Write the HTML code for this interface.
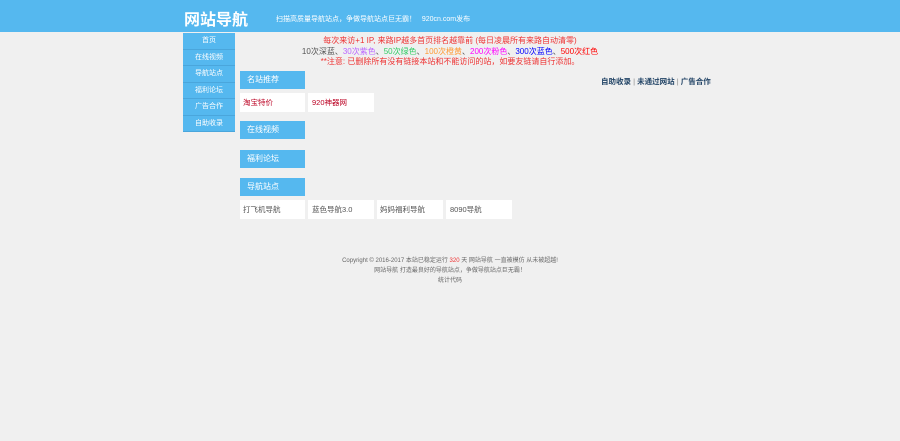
<!DOCTYPE html>
<html><head><meta charset="utf-8"><style>
*{margin:0;padding:0;box-sizing:border-box}
body{width:900px;height:441px;background:#f0f0f0;font-family:"Liberation Sans","Noto Sans CJK SC",sans-serif;position:relative;overflow:hidden;font-size:8px}
.hd{position:absolute;left:0;top:0;width:900px;height:32px;background:#55b8ef}
.logo{position:absolute;left:184px;top:6px;color:#fff;font-size:16px;font-weight:bold}
.slogan{position:absolute;left:276px;top:14px;color:#fff;font-size:7px}
.nav{position:absolute;left:183px;top:33px;width:52px}
.nav div{height:16.5px;background:#55b8ef;color:#fff;font-size:7px;text-align:center;line-height:16px;border-bottom:1px solid #4aa6dc}
.notice{position:absolute;left:270px;top:36px;width:360px;text-align:center;font-size:8px;line-height:10.5px}
.t{position:absolute;left:240px;width:65px;height:18px;background:#55b8ef;color:#fff;font-size:8px;line-height:18px;padding-left:7px}
.c{position:absolute;height:19px;background:#fff;font-size:7.5px;line-height:19px;padding-left:3px}
.links{position:absolute;left:601px;top:76px;font-size:7.5px;color:#246;font-weight:bold}
.ft{position:absolute;left:300px;width:300px;text-align:center;color:#666;font-size:6px}
</style></head><body>
<div class="hd"><div class="logo">网站导航</div><div class="slogan">扫描高质量导航站点，争做导航站点巨无霸！ &nbsp; 920cn.com发布</div></div>
<div class="nav"><div>首页</div><div>在线视频</div><div>导航站点</div><div>福利论坛</div><div>广告合作</div><div>自助收录</div></div>
<div class="notice"><div style="color:#e33">每次来访+1 IP, 来路IP越多首页排名越靠前 (每日凌晨所有来路自动清零)</div>
<div style="color:#555">10次深蓝、<span style="color:#b6f">30次紫色</span>、<span style="color:#3c6">50次绿色</span>、<span style="color:#f93">100次橙黄</span>、<span style="color:#f0f">200次粉色</span>、<span style="color:#00f">300次蓝色</span>、<span style="color:#f00">500次红色</span></div>
<div style="color:#e33">**注意: 已删除所有没有链接本站和不能访问的站，如要友链请自行添加。</div></div>
<div class="links">自助收录 <span style="font-weight:normal;color:#888">|</span> 未通过网站 <span style="font-weight:normal;color:#888">|</span> 广告合作</div>
<div class="t" style="top:71px">名站推荐</div>
<div class="c" style="left:240px;top:93px;width:65px;color:#b02">淘宝特价</div>
<div class="c" style="left:308px;top:93px;width:66px;color:#b02;padding-left:4px">920神器网</div>
<div class="t" style="top:121px">在线视频</div>
<div class="t" style="top:150px">福利论坛</div>
<div class="t" style="top:178px">导航站点</div>
<div class="c" style="left:240px;top:200px;width:65px;color:#555">打飞机导航</div>
<div class="c" style="left:308px;top:200px;width:66px;color:#555;padding-left:4px">蓝色导航3.0</div>
<div class="c" style="left:377px;top:200px;width:66px;color:#555">妈妈福利导航</div>
<div class="c" style="left:446px;top:200px;width:66px;color:#555;padding-left:4px">8090导航</div>
<div class="ft" style="top:255px">Copyright © 2016-2017 本站已稳定运行 <span style="color:#e33">320</span> 天 网站导航 一直被模仿 从未被超越!</div>
<div class="ft" style="top:265px">网站导航 打造最良好的导航站点，争做导航站点巨无霸！</div>
<div class="ft" style="top:275px">统计代码</div>
</body></html>
